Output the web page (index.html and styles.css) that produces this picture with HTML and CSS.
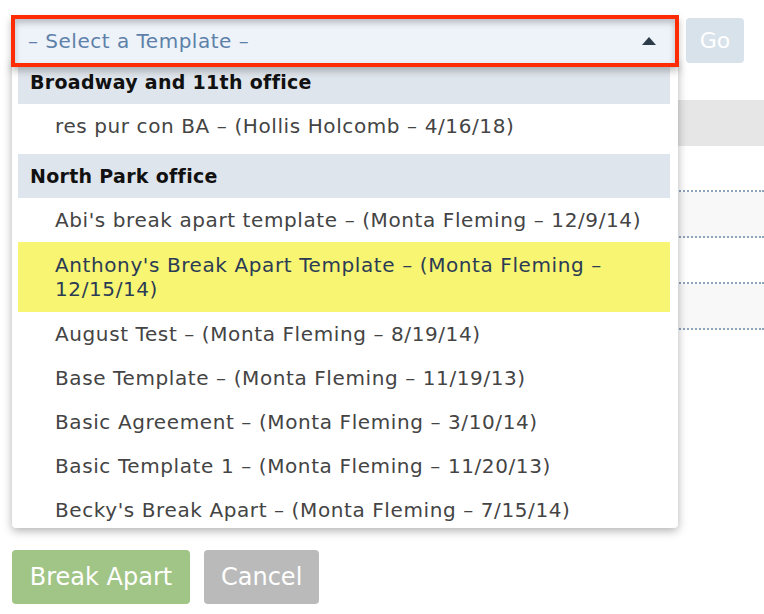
FILE: index.html
```html
<!DOCTYPE html>
<html>
<head>
<meta charset="utf-8">
<link rel="stylesheet" href="styles.css">
</head>
<body>
<div class="page">
  <div class="toolbar">
    <div class="select-wrap">
      <div class="select">
        <span class="placeholder">– Select a Template –</span>
        <span class="caret"></span>
      </div>
      <div class="dropdown">
        <div class="group">
          <div class="group-title">Broadway and 11th office</div>
          <div class="option">res pur con BA – (Hollis Holcomb – 4/16/18)</div>
        </div>
        <div class="group">
          <div class="group-title">North Park office</div>
          <div class="option">Abi's break apart template – (Monta Fleming – 12/9/14)</div>
          <div class="option active">Anthony's Break Apart Template – (Monta Fleming – 12/15/14)</div>
          <div class="option">August Test – (Monta Fleming – 8/19/14)</div>
          <div class="option">Base Template – (Monta Fleming – 11/19/13)</div>
          <div class="option">Basic Agreement – (Monta Fleming – 3/10/14)</div>
          <div class="option">Basic Template 1 – (Monta Fleming – 11/20/13)</div>
          <div class="option">Becky's Break Apart – (Monta Fleming – 7/15/14)</div>
        </div>
      </div>
    </div>
    <button class="btn-go">Go</button>
  </div>

  <div class="table">
    <div class="row head"></div>
    <div class="row"></div>
    <div class="row alt"></div>
    <div class="row"></div>
    <div class="row alt"></div>
  </div>

  <div class="actions">
    <button class="btn btn-primary">Break Apart</button>
    <button class="btn btn-cancel">Cancel</button>
  </div>
</div>
</body>
</html>
```

FILE: styles.css
```css
* { box-sizing: border-box; }
html, body { margin: 0; padding: 0; background: #fff; }
body {
  font-family: "DejaVu Sans", "Open Sans", sans-serif;
  font-size: 20px;
  color: #444;
}
.page { padding: 15px 0 0 12px; }

.toolbar {
  display: flex;
  align-items: flex-start;
  gap: 7px;
}
.select-wrap {
  position: relative;
  width: 667px;
}
.select {
  position: relative;
  z-index: 2;
  height: 52px;
  margin-left: -1px;
  border: 4px solid #fe2b05;
  background: #eef3fa;
  box-shadow: inset 0 4px 6px rgba(0,0,0,0.22), 0 4px 7px rgba(0,0,0,0.25);
  display: flex;
  align-items: center;
  justify-content: space-between;
  padding: 0 19px 0 13px;
}
.placeholder {
  color: #5d80a8;
  font-size: 20px;
  letter-spacing: 0.5px;
}
.caret {
  width: 0; height: 0;
  border-left: 7px solid transparent;
  border-right: 7px solid transparent;
  border-bottom: 8px solid #2c3a4a;
}
.dropdown {
  position: absolute;
  z-index: 1;
  left: 0;
  top: 45px;
  width: 666px;
  height: 468px;
  overflow: hidden;
  background: #fff;
  padding: 0 8px 0 6px;
  border-radius: 0 0 4px 4px;
  box-shadow: 0 3px 10px rgba(0,0,0,0.3);
}
.group + .group { margin-top: 6px; }
.group-title {
  height: 44px;
  display: flex;
  align-items: center;
  padding-left: 12px;
  background: #dfe5ec;
  color: #111;
  font-weight: bold;
  font-size: 19px;
  letter-spacing: 0.3px;
}
.option {
  min-height: 44px;
  padding: 10px 10px 10px 37px;
  line-height: 24px;
  color: #444;
  letter-spacing: 0.6px;
}
.option.active {
  background: #f7f571;
  color: #2c3b55;
  padding-top: 11px;
  padding-bottom: 11px;
}

.btn-go {
  margin-top: 3px;
  width: 58px;
  height: 45px;
  border: 0;
  border-radius: 4px;
  background: #d8e2ea;
  color: #fff;
  font-family: inherit;
  font-size: 22px;
  padding: 0;
}

.table { margin-top: 33px; }
.row {
  height: 46px;
  border-bottom: 2px dotted #8ea3bc;
}
.row.head { background: #e6e6e6; border-bottom: 0; }
.row.alt { background: #f8f8f8; }

.actions {
  margin-top: 220px;
  display: flex;
  gap: 14px;
}
.btn {
  height: 54px;
  border: 0;
  border-radius: 4px;
  color: #fff;
  font-family: inherit;
  font-size: 24px;
  padding: 0 17px;
}
.btn-primary { background: #a1c586; width: 178px; }
.btn-cancel { background: #bababa; width: 115px; }
```
